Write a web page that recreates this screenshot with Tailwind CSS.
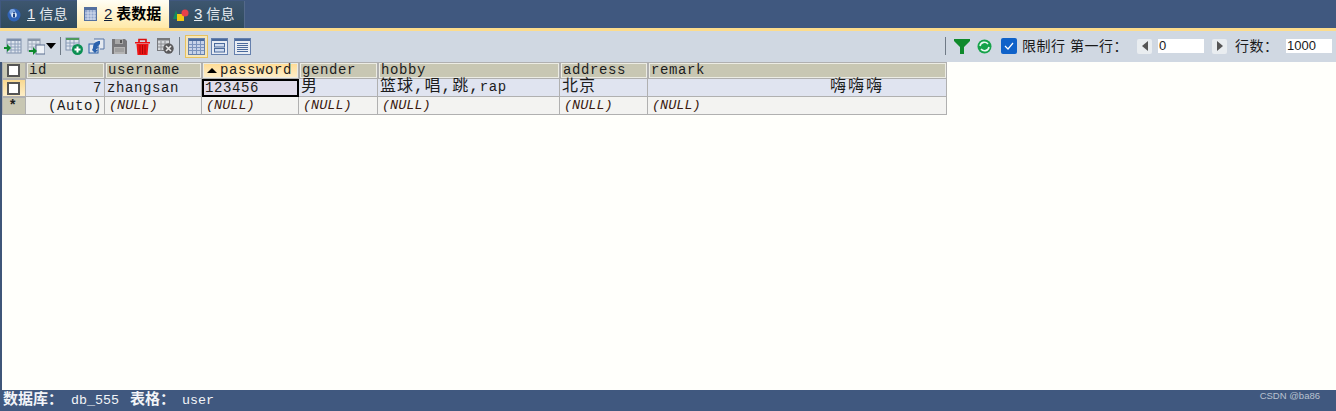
<!DOCTYPE html>
<html lang="zh-CN">
<head>
  <meta charset="UTF-8">
  <title>表数据</title>
  <script src="https://cdn.jsdelivr.net/npm/@tailwindcss/browser@4"></script>
</head>
<body class="w-[1336px] h-[411px] overflow-hidden flex flex-col bg-[#fffffb] font-['Liberation_Sans','Noto_Sans_CJK_SC',sans-serif]">
  <!-- tabs -->
  <div class="h-[28px] shrink-0 bg-[#40587f] flex items-end pl-[1px] text-[14px]">
    <div class="w-[76px] h-[27px] bg-gradient-to-b from-[#3d566f] to-[#2f4a5c] flex items-center gap-[6px] pl-[6px] text-[#e8edf2]">
      <svg width="14" height="14" viewBox="0 0 14 14"><circle cx="7" cy="7" r="6.5" fill="#2f62b5"/><circle cx="5.5" cy="4" r="3" fill="#7fa6e0"/><circle cx="7" cy="7" r="2.8" fill="#dce8f8"/><rect x="6" y="6" width="2" height="3.4" fill="#1d3f80"/><rect x="6" y="4.2" width="2" height="1.2" fill="#1d3f80"/></svg>
      <span class="whitespace-nowrap"><span class="underline text-[15px]">1</span> <span class="tracking-[0.3px]">信息</span></span>
    </div>
    <div class="w-[92px] h-[28px] bg-gradient-to-b from-[#fffef5] to-[#ffe9a8] flex items-center gap-[7px] pl-[7px] text-black font-bold">
      <svg width="13" height="14" viewBox="0 0 13 14"><rect x="0.5" y="0.5" width="12" height="13" fill="#8fa5cc" stroke="#54709f"/><rect x="1" y="1" width="11" height="2" fill="#54709f"/><path d="M4 3v10M7 3v10M10 3v10M1 6h11M1 9h11M1 12h11" stroke="#dfe6f2" stroke-width="0.8"/></svg>
      <span class="whitespace-nowrap"><span class="underline font-normal text-[#10203a] text-[15px]">2</span> <span class="text-[15px]">表数据</span></span>
    </div>
    <div class="w-[75px] h-[27px] ml-[1px] bg-gradient-to-b from-[#3d566f] to-[#2f4a5c] flex items-center gap-[5px] pl-[3px] text-[#e8edf2] border-r border-[#54698a]">
      <svg width="16" height="14" viewBox="0 0 16 14"><path d="M0 11L3 2l3 9z" fill="#138a5c"/><rect x="4" y="6" width="7" height="7" fill="#f0c814"/><circle cx="12" cy="5" r="3.5" fill="#e8404a"/></svg>
      <span class="whitespace-nowrap"><span class="underline text-[15px]">3</span> <span class="tracking-[0.3px]">信息</span></span>
    </div>
  </div>
  <div class="h-[3px] shrink-0 bg-[#fddc8c]"></div>
  <!-- toolbar -->
  <div class="h-[31px] shrink-0 pb-[1px] bg-[#d0d8e2] flex items-center justify-between text-[14px] text-[#1a1a1a]">
    <div class="flex items-center pl-[4px]">
      <svg width="18" height="16" viewBox="0 0 18 16"><rect x="3" y="1" width="14" height="14" fill="#dfe5ee" stroke="#7f90ab"/><rect x="3" y="1" width="14" height="2" fill="#7f90ab"/><path d="M7 3v12M11 3v12M14 3v12M3 6h14M3 9h14M3 12h14" stroke="#8ea0bb"/><path d="M0 9h3V6l4 4-4 4v-3H0z" fill="#0d8a2d"/></svg>
      <svg class="ml-[5px]" width="18" height="17" viewBox="0 0 18 17"><rect x="1" y="1" width="12" height="12" fill="#dfe5ee" stroke="#8c98aa"/><rect x="1" y="1" width="12" height="2" fill="#8c98aa"/><path d="M5 3v10M9 3v10M1 6h12M1 9h12" stroke="#a3aebf"/><rect x="9" y="7" width="9" height="9" fill="#eef2f7" stroke="#5b6f8f"/><path d="M2 12h4V9l4 4-4 4v-3H2z" fill="#0d8a2d"/></svg>
      <div class="ml-[1px] w-0 h-0 border-x-[5px] border-x-transparent border-t-[6px] border-t-black"></div>
      <div class="ml-[4px] w-[1px] h-[18px] bg-[#6f7a86]"></div>
      <svg class="ml-[4px]" width="18" height="18" viewBox="0 0 18 18"><rect x="1" y="1" width="13" height="12" fill="#dfe5ee" stroke="#7f90ab"/><rect x="1" y="1" width="13" height="2" fill="#4d9a5c"/><path d="M5 3v10M9 3v10M1 6h13M1 9h13" stroke="#8ea0bb"/><circle cx="12.5" cy="12.5" r="5.5" fill="#0b8f53"/><path d="M9.5 12.5h6M12.5 9.5v6" stroke="#fff" stroke-width="2"/></svg>
      <svg class="ml-[5px]" width="17" height="16" viewBox="0 0 17 16"><path d="M6 1h10v10h-4" fill="#e4e9f0" stroke="#5674a5"/><rect x="1" y="6" width="9" height="9" fill="#e4e9f0" stroke="#2b5fa5"/><path d="M5 10c0-5 3-7 7-7v3l-3 3 3 0c-2 0-3 1-4 3l2 0-3 3-3-3z" fill="#2b62ad"/></svg>
      <svg class="ml-[7px]" width="15" height="15" viewBox="0 0 15 15"><path d="M0 0h13l2 2v13H0z" fill="#77777a"/><rect x="3" y="0" width="8" height="5" fill="#a8a8a8"/><rect x="8" y="1" width="2" height="3" fill="#555"/><rect x="2" y="8" width="11" height="7" fill="#b4b4b4"/><path d="M3 10h9M3 12h9" stroke="#8a8a8a"/></svg>
      <svg class="ml-[8px]" width="15" height="17" viewBox="0 0 15 17"><path d="M0 4h15v1.5H0z" fill="#ee1111"/><path d="M4 4V1.5h7V4" fill="none" stroke="#d81010" stroke-width="1.6"/><path d="M1.5 6h12l-1 11h-10z" fill="#f01414"/><path d="M5 7v9M7.5 7v9M10 7v9" stroke="#a80808"/></svg>
      <svg class="ml-[7px]" width="17" height="16" viewBox="0 0 17 16"><rect x="0.5" y="0.5" width="12" height="12" fill="#d5d8dc" stroke="#77797d"/><rect x="0.5" y="0.5" width="12" height="2" fill="#77797d"/><path d="M4 3v10M8 3v10M1 6h12M1 9h12" stroke="#8c8e92"/><circle cx="11.5" cy="10.5" r="5.2" fill="#5a5a5c"/><path d="M9 8l5 5M14 8l-5 5" stroke="#e8e8e8" stroke-width="1.6"/></svg>
      <div class="ml-[5px] w-[1px] h-[18px] bg-[#6f7a86]"></div>
      <div class="ml-[5px] w-[23px] h-[23px] bg-[#f5e6ba] border border-[#e7c15e] flex items-center justify-center">
        <svg width="17" height="17" viewBox="0 0 17 17"><rect x="0.5" y="0.5" width="16" height="16" fill="#c6d2e8" stroke="#6580ad"/><rect x="1" y="1" width="15" height="2" fill="#4a6a9c"/><path d="M4.5 3v13M8.5 3v13M12.5 3v13M1 6.5h15M1 9.5h15M1 12.5h15" stroke="#7b93bd"/></svg>
      </div>
      <svg class="ml-[3px]" width="17" height="17" viewBox="0 0 17 17"><rect x="0.5" y="0.5" width="16" height="16" fill="#e7ecf3" stroke="#6580ad"/><rect x="1" y="1" width="15" height="2" fill="#4a6a9c"/><rect x="3.5" y="5.5" width="10" height="3.5" fill="#cfdcf0" stroke="#4a6a9c"/><rect x="3.5" y="10.5" width="10" height="3.5" fill="#cfdcf0" stroke="#4a6a9c"/></svg>
      <svg class="ml-[6px]" width="17" height="17" viewBox="0 0 17 17"><rect x="0.5" y="0.5" width="16" height="16" fill="#e7ecf3" stroke="#6580ad"/><rect x="1" y="1" width="15" height="2" fill="#4a6a9c"/><path d="M3 5.5h11M3 7.5h11M3 9.5h11M3 11.5h11M3 13.5h11" stroke="#4a6a9c"/></svg>
    </div>
    <div class="flex items-center">
      <div class="w-[1px] h-[18px] bg-[#6f7a86] mr-[8px]"></div>
      <svg width="16" height="15" viewBox="0 0 16 15"><path d="M0 0h16v2L10 8v7H6V8L0 2z" fill="#0f8a2c"/></svg>
      <svg class="ml-[7px]" width="15" height="15" viewBox="0 0 15 15"><circle cx="7.5" cy="7.5" r="7" fill="#16a34a"/><path d="M3 7a4.5 4.5 0 0 1 8-2M12 8a4.5 4.5 0 0 1-8 2" fill="none" stroke="#e8f8f0" stroke-width="1.6"/></svg>
      <div class="ml-[9px] w-[16px] h-[16px] rounded-[2px] bg-[#0f62c9] flex items-center justify-center">
        <svg width="10" height="8" viewBox="0 0 10 8"><path d="M1 4l3 3 5-6" fill="none" stroke="#fff" stroke-width="1.2"/></svg>
      </div>
      <span class="ml-[5px] w-[48px] whitespace-nowrap tracking-[0.5px]">限制行</span>
      <span class="w-[67px] whitespace-nowrap tracking-[0.5px]">第一行：</span>
      <div class="w-[15px] h-[15px] rounded-[2px] bg-[#e9edf0] flex items-center justify-center"><div class="w-0 h-0 border-y-[5px] border-y-transparent border-r-[6px] border-r-[#555]"></div></div>
      <div class="ml-[6px] w-[46px] h-[14px] bg-white text-[13px] leading-[14px] pl-[1px]">0</div>
      <div class="ml-[8px] w-[15px] h-[15px] rounded-[2px] bg-[#e9edf0] flex items-center justify-center"><div class="w-0 h-0 border-y-[5px] border-y-transparent border-l-[6px] border-l-[#555]"></div></div>
      <span class="ml-[8px] w-[51px] whitespace-nowrap tracking-[0.5px]">行数：</span>
      <div class="w-[46px] h-[14px] bg-white text-[13px] leading-[14px] pl-[1px] mr-[4px]">1000</div>
    </div>
  </div>
  <!-- grid -->
  <div class="flex-1 border-l-2 border-[#3f5678]">
    <div class="w-[945px] grid grid-cols-[24px_79px_97px_97px_79px_182px_88px_299px] grid-rows-[17px_18px_18px] font-['Liberation_Mono','Noto_Sans_CJK_SC',monospace] text-[14px] tracking-[0.6px] text-[#1c1c1c] bg-[#b0b0b0]">
      <div class="bg-[#c8c7b3] border border-[#b0b0b0] flex items-center justify-center pr-[2px]"><div class="w-[13px] h-[13px] bg-white border-2 border-[#555]"></div></div>
      <div class="bg-[#c8c7b3] shadow-[inset_0_0_0_1px_#b0b0b0,inset_0_0_0_2px_#ecece4] pl-[3px] leading-[17px]">id</div>
      <div class="bg-[#c8c7b3] shadow-[inset_0_0_0_1px_#b0b0b0,inset_0_0_0_2px_#ecece4] pl-[3px] leading-[17px]">username</div>
      <div class="bg-gradient-to-b from-[#ffd98c] to-[#fdf0cf] shadow-[inset_0_0_0_1px_#b0b0b0,inset_0_0_0_2px_#ecece4] pl-[5px] flex items-center gap-[3px] leading-[17px]"><span class="w-0 h-0 border-x-[5px] border-x-transparent border-b-[5px] border-b-black"></span>password</div>
      <div class="bg-[#c8c7b3] shadow-[inset_0_0_0_1px_#b0b0b0,inset_0_0_0_2px_#ecece4] pl-[3px] leading-[17px]">gender</div>
      <div class="bg-[#c8c7b3] shadow-[inset_0_0_0_1px_#b0b0b0,inset_0_0_0_2px_#ecece4] pl-[3px] leading-[17px]">hobby</div>
      <div class="bg-[#c8c7b3] shadow-[inset_0_0_0_1px_#b0b0b0,inset_0_0_0_2px_#ecece4] pl-[3px] leading-[17px]">address</div>
      <div class="bg-[#c8c7b3] shadow-[inset_0_0_0_1px_#b0b0b0,inset_0_0_0_2px_#ecece4] pl-[3px] leading-[17px]">remark</div>

      <div class="bg-gradient-to-b from-[#f9d88f] to-[#fdeec8] border border-[#b0b0b0] flex items-center justify-center pr-[2px]"><div class="w-[13px] h-[13px] bg-white border-2 border-[#555]"></div></div>
      <div class="bg-[#e0e4f0] border-b border-r border-[#b0b0b0] text-right pr-[2px] leading-[18px]">7</div>
      <div class="bg-[#e0e4f0] border-b border-r border-[#b0b0b0] pl-[2px] leading-[18px]">zhangsan</div>
      <div class="bg-[#e0dcea] border-2 border-black pl-[1px] leading-[14px]">123456</div>
      <div class="bg-[#e0e4f0] border-b border-r border-[#b0b0b0] pl-[2px] text-[16px] leading-[17px]">男</div>
      <div class="bg-[#e0e4f0] border-b border-r border-[#b0b0b0] pl-[2px] text-[16px] leading-[17px] tracking-[1px] whitespace-nowrap">篮球,唱,跳,<span class="text-[14px] tracking-[0.6px]">rap</span></div>
      <div class="bg-[#e0e4f0] border-b border-r border-[#b0b0b0] pl-[2px] text-[16px] leading-[17px] tracking-[1px]">北京</div>
      <div class="bg-[#e0e4f0] border-b border-r border-[#b0b0b0] pl-[182px] text-[16px] leading-[17px] tracking-[2px]">嗨嗨嗨</div>

      <div class="bg-[#c8c7b3] border border-[#b0b0b0] text-center font-bold leading-[16px] pr-[2px]">*</div>
      <div class="bg-[#f3f3f1] border-b border-r border-[#b0b0b0] text-right pr-[2px] leading-[18px]">(Auto)</div>
      <div class="bg-[#f3f3f1] border-b border-r border-[#b0b0b0] pl-[4px] italic text-[#3a1a10] text-[13.5px] tracking-[0px] leading-[18px]">(NULL)</div>
      <div class="bg-[#f3f3f1] border-b border-r border-[#b0b0b0] pl-[4px] italic text-[#3a1a10] text-[13.5px] tracking-[0px] leading-[18px]">(NULL)</div>
      <div class="bg-[#f3f3f1] border-b border-r border-[#b0b0b0] pl-[4px] italic text-[#3a1a10] text-[13.5px] tracking-[0px] leading-[18px]">(NULL)</div>
      <div class="bg-[#f3f3f1] border-b border-r border-[#b0b0b0] pl-[4px] italic text-[#3a1a10] text-[13.5px] tracking-[0px] leading-[18px]">(NULL)</div>
      <div class="bg-[#f3f3f1] border-b border-r border-[#b0b0b0] pl-[4px] italic text-[#3a1a10] text-[13.5px] tracking-[0px] leading-[18px]">(NULL)</div>
      <div class="bg-[#f3f3f1] border-b border-r border-[#b0b0b0] pl-[4px] italic text-[#3a1a10] text-[13.5px] tracking-[0px] leading-[18px]">(NULL)</div>
    </div>
  </div>
  <!-- status bar -->
  <div class="h-[21px] shrink-0 bg-[#40587f] flex items-center justify-between pl-[3px] pr-[16px] text-[#f2f4f8]">
    <div class="flex items-baseline pt-[1px] text-[13.33px] font-['Liberation_Mono','Noto_Sans_CJK_SC',monospace]">
      <span class="font-bold text-[15px] w-[68px]">数据库：</span><span>db_555</span><span class="ml-[11px] font-bold text-[15px] w-[52px]">表格：</span><span>user</span>
    </div>
    <span class="text-[9.5px] text-[#b9c2d0] mb-[9px]">CSDN @ba86</span>
  </div>
</body>
</html>
